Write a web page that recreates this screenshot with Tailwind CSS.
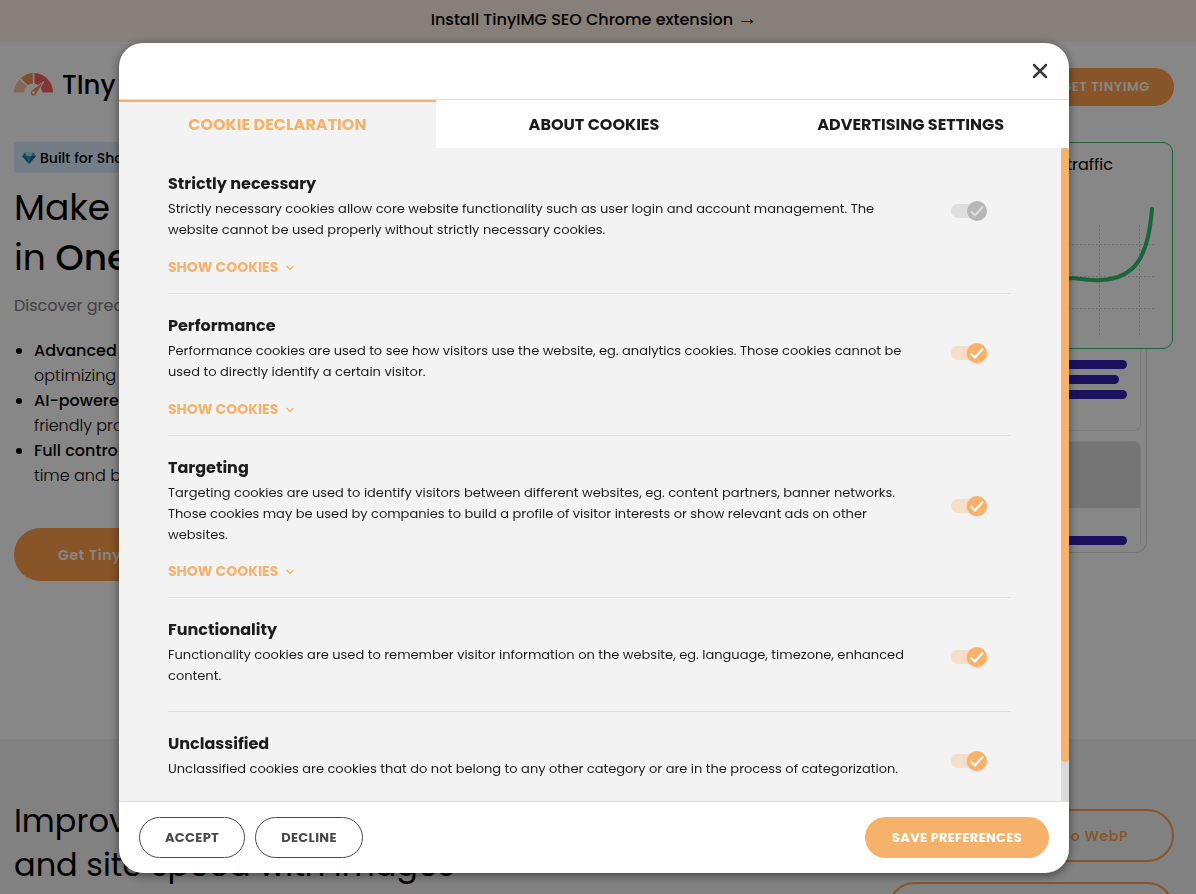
<!DOCTYPE html>
<html lang="en">
<head>
    <meta charset="UTF-8" />
    <meta name="viewport" content="width=device-width, initial-scale=1.0" />
    <title>TinyIMG SEO &amp; Image Optimizer</title>
    <script src="https://cdn.jsdelivr.net/npm/@tailwindcss/browser@4"></script>
    <style>
        body {
            font-family: 'Poppins', 'Inter', sans-serif;
        }
    </style>
</head>
<body class="h-screen overflow-hidden bg-white text-black">
    <!-- Page behind the dialog -->
    <div class="flex h-[42px] items-center justify-center bg-[#fff0e4] pr-2 pb-0.5">
        <a href="#" class="text-base font-medium">Install TinyIMG SEO Chrome extension <span class="font-['Liberation_Sans'] text-xl leading-none font-normal">→</span></a>
    </div>

    <div class="pr-[22px] pl-3.5">
        <header class="flex h-[90px] items-center justify-between">
            <a href="#" class="flex items-center gap-2 pb-1">
                <svg class="h-6 w-10" viewBox="0 0 40 24">
                    <path d="M0 19.500A19.500 19.500 0 0 1 5.500 6.500L13 13A10 10 0 0 0 10 19.500Z" fill="#fdc39a" />
                    <path d="M6.700 5.300A19.500 19.500 0 0 1 18.800 0V10.500A10 10 0 0 0 14 12Z" fill="#f5924c" />
                    <path d="M20.500 0A19.500 19.500 0 0 1 39 19.500H28.500A10 10 0 0 0 20.500 10.500Z" fill="#f9635f" />
                    <path d="M30 8.500L22.800 20.300A3.300 3.300 0 1 1 18 16.800Z" fill="#f5924c" stroke="#fff" stroke-width="1" />
                    <circle cx="19.500" cy="19.500" r="1.400" fill="#fff" />
                </svg>
                <span class="text-[26px] leading-6 font-medium">TIny<span class="ml-1">IMG</span></span>
            </a>
            <a href="#" class="flex h-[38px] items-center rounded-full bg-[#ffa04d] px-6 text-[13px] font-semibold tracking-wider text-white">GET TINYIMG</a>
        </header>

        <section class="grid h-[607px] grid-cols-2 gap-8 pt-[10px]">
            <div>
                <div class="inline-flex h-[31px] items-center gap-1 rounded-sm bg-[#dcebfb] px-2 text-sm font-medium">
                    <svg class="h-3 w-[14px]" viewBox="0 0 14 12">
                        <path d="M3 0H11L14 4L7 12L0 4Z" fill="#2d9cc0" />
                        <path d="M3 0H11L9.500 4H4.500Z" fill="#9fe0f2" />
                        <path d="M0 4H4.500L7 12Z" fill="#1b7ea6" />
                        <path d="M14 4H9.500L7 12Z" fill="#15678c" />
                    </svg>
                    Built for Shopify
                </div>
                <h1 class="mt-[10px] text-[36px] leading-[50px]">Make every image<br />in <span class="font-medium">One click</span></h1>
                <p class="mt-[11px] text-base leading-6 text-[#7b7b7b]">Discover great SEO results</p>
                <ul class="mt-5 list-disc pl-5 text-base leading-[25px] font-light">
                    <li><span class="font-medium">Advanced</span> image<br />optimizing tools</li>
                    <li><span class="font-medium">AI-powered</span> SEO<br />friendly product text</li>
                    <li><span class="font-medium">Full control</span> at any<br />time and budget</li>
                </ul>
                <a href="#" class="mt-10 inline-flex h-[53px] items-center rounded-full bg-[#ffa04d] px-11 text-sm font-semibold tracking-wider text-white">Get TinyIMG now</a>
            </div>
            <div class="flex flex-col pr-px">
                <div class="relative z-10 h-[207px] rounded-[10px] border border-[#30c06e] bg-white px-5 pt-2">
                    <div class="pr-[39px] text-right text-base leading-7">Organic traffic</div>
                    <svg class="absolute right-0 bottom-0 h-[150px] w-[200px]" viewBox="0 0 200 150">
                        <g stroke="#d0d0d0" stroke-dasharray="2 2" fill="none">
                            <path d="M0 46.500H184M0 78.500H184M0 110.500H184M127.500 27V140M167.500 27V140" />
                        </g>
                        <path d="M0 60C60 78 70 79 95 80C110 80 117 83 130 82C162 80 176 61 180 11" fill="none" stroke="#30c06e" stroke-width="4" stroke-linecap="round" />
                    </svg>
                </div>
                <div class="mr-[26px] h-[204px] rounded-b-xl border border-t-0 border-[#dcdcdc] px-[5px]">
                    <div class="flex h-[82px] flex-col items-end gap-[6px] rounded-b-md border border-t-0 border-[#ebebeb] pt-[11px] pr-[13px]">
                        <div class="h-[9px] w-3/5 rounded-full bg-[#3120b4]"></div>
                        <div class="mr-2 h-[9px] w-1/2 rounded-full bg-[#3120b4]"></div>
                        <div class="h-[9px] w-3/5 rounded-full bg-[#3120b4]"></div>
                    </div>
                    <div class="mt-[10px] flex h-[104px] flex-col items-end rounded-t-md border border-b-0 border-[#ebebeb]">
                        <div class="h-[67px] w-full rounded-t-md bg-[#dedede]"></div>
                        <div class="mt-7 mr-[13px] h-[9px] w-3/5 shrink-0 rounded-full bg-[#3120b4]"></div>
                    </div>
                </div>
            </div>
        </section>
    </div>

    <section class="flex h-[155px] justify-between overflow-hidden bg-[#f3f3f3] pt-[60px] pr-[22px] pl-3.5">
        <h2 class="text-[32px] leading-[44px]">Improve loading time<br />and site speed with images</h2>
        <div class="flex w-[286px] flex-col gap-5 pt-[10px]">
            <a href="#" class="flex h-[53px] shrink-0 items-center justify-end rounded-full border-2 border-[#ffa04d] px-11 text-sm font-medium tracking-wider text-[#ffa04d]">Convert to WebP</a>
            <a href="#" aria-label="Resize images" class="h-[53px] shrink-0 rounded-full border-2 border-[#ffa04d]"></a>
        </div>
    </section>

    <!-- Cookie dialog -->
    <div class="fixed inset-0 z-20 flex items-start justify-center bg-black/47 pt-[43px] pr-2">
        <div role="dialog" aria-label="Cookie preferences" class="flex h-[calc(100vh-64px)] w-full max-w-[950px] flex-col overflow-hidden rounded-3xl bg-white text-[#1c1c1c] shadow-[0_2px_10px_rgba(0,0,0,0.5)]">
            <div class="flex h-[57px] shrink-0 items-center justify-end border-b border-[#dfdfdf] pr-5">
                <button type="button" aria-label="Close" class="p-px">
                    <svg class="size-4" viewBox="0 0 16 16" fill="none" stroke="#3a3a3a" stroke-width="2.500" stroke-linecap="round">
                        <path d="M2 2L14 14M14 2L2 14" />
                    </svg>
                </button>
            </div>

            <div role="tablist" class="grid h-12 shrink-0 grid-cols-3 text-base font-bold">
                <button type="button" role="tab" aria-selected="true" class="border-t-2 border-[#f6b26b] bg-[#f3f3f3] text-[#f6b26b]">COOKIE DECLARATION</button>
                <button type="button" role="tab" class="pt-0.5">ABOUT COOKIES</button>
                <button type="button" role="tab" class="pt-0.5">ADVERTISING SETTINGS</button>
            </div>

            <div class="relative min-h-0 flex-1 bg-[#f3f3f3]">
                <div class="h-full overflow-y-auto pt-1 pr-[58px] pl-[49px] [scrollbar-width:none]">
                    <section class="border-b border-[#dfdfdf] pt-5 pb-[15px]">
                        <div class="flex items-center justify-between pr-6">
                            <div>
                                <h3 class="text-base leading-6 font-bold">Strictly necessary</h3>
                                <p class="mt-0.5 text-[13px] leading-[21px]">Strictly necessary cookies allow core website functionality such as user login and account management. The<br />website cannot be used properly without strictly necessary cookies.</p>
                            </div>
                            <label class="relative mt-[10px] flex h-5 w-9 shrink-0 items-center">
                                <input type="checkbox" checked disabled aria-label="Strictly necessary" class="peer sr-only" />
                                <span class="h-[14px] w-[34px] rounded-full bg-[#dedede]"></span>
                                <span class="absolute left-0 flex size-5 items-center justify-center rounded-full bg-[#b7b7b7] peer-checked:left-4">
                                    <svg class="h-3 w-[14px]" viewBox="0 0 14 12" fill="none" stroke="#dedede" stroke-width="2"><path d="M1 6.500L5 10.500L13 1.500" /></svg>
                                </span>
                            </label>
                        </div>
                        <button type="button" class="mt-[17px] flex items-center gap-2 text-sm leading-[21px] font-bold text-[#f6b26b]">SHOW COOKIES
                            <svg class="h-[6px] w-2" viewBox="0 0 8 6" fill="none" stroke="currentColor" stroke-width="1.500"><path d="M0.500 1L4 4.500L7.500 1" /></svg>
                        </button>
                    </section>

                    <section class="border-b border-[#dfdfdf] pt-5 pb-[15px]">
                        <div class="flex items-center justify-between pr-6">
                            <div>
                                <h3 class="text-base leading-6 font-bold">Performance</h3>
                                <p class="mt-0.5 text-[13px] leading-[21px]">Performance cookies are used to see how visitors use the website, eg. analytics cookies. Those cookies cannot be<br />used to directly identify a certain visitor.</p>
                            </div>
                            <label class="relative mt-[10px] flex h-5 w-9 shrink-0 cursor-pointer items-center">
                                <input type="checkbox" checked aria-label="Performance" class="peer sr-only" />
                                <span class="h-[14px] w-[34px] rounded-full bg-[#f5dfc9]"></span>
                                <span class="absolute left-0 flex size-5 items-center justify-center rounded-full bg-[#f6b26b] shadow-sm peer-checked:left-4">
                                    <svg class="h-3 w-[14px]" viewBox="0 0 14 12" fill="none" stroke="#fff" stroke-width="2"><path d="M1 6.500L5 10.500L13 1.500" /></svg>
                                </span>
                            </label>
                        </div>
                        <button type="button" class="mt-[17px] flex items-center gap-2 text-sm leading-[21px] font-bold text-[#f6b26b]">SHOW COOKIES
                            <svg class="h-[6px] w-2" viewBox="0 0 8 6" fill="none" stroke="currentColor" stroke-width="1.500"><path d="M0.500 1L4 4.500L7.500 1" /></svg>
                        </button>
                    </section>

                    <section class="border-b border-[#dfdfdf] pt-5 pb-[15px]">
                        <div class="flex items-center justify-between pr-6">
                            <div>
                                <h3 class="text-base leading-6 font-bold">Targeting</h3>
                                <p class="mt-0.5 text-[13px] leading-[21px]">Targeting cookies are used to identify visitors between different websites, eg. content partners, banner networks.<br />Those cookies may be used by companies to build a profile of visitor interests or show relevant ads on other<br />websites.</p>
                            </div>
                            <label class="relative mt-[10px] flex h-5 w-9 shrink-0 cursor-pointer items-center">
                                <input type="checkbox" checked aria-label="Targeting" class="peer sr-only" />
                                <span class="h-[14px] w-[34px] rounded-full bg-[#f5dfc9]"></span>
                                <span class="absolute left-0 flex size-5 items-center justify-center rounded-full bg-[#f6b26b] shadow-sm peer-checked:left-4">
                                    <svg class="h-3 w-[14px]" viewBox="0 0 14 12" fill="none" stroke="#fff" stroke-width="2"><path d="M1 6.500L5 10.500L13 1.500" /></svg>
                                </span>
                            </label>
                        </div>
                        <button type="button" class="mt-4 flex items-center gap-2 text-sm leading-[21px] font-bold text-[#f6b26b]">SHOW COOKIES
                            <svg class="h-[6px] w-2" viewBox="0 0 8 6" fill="none" stroke="currentColor" stroke-width="1.500"><path d="M0.500 1L4 4.500L7.500 1" /></svg>
                        </button>
                    </section>

                    <section class="border-b border-[#dfdfdf] pt-5 pb-[25px]">
                        <div class="flex items-center justify-between pr-6">
                            <div>
                                <h3 class="text-base leading-6 font-bold">Functionality</h3>
                                <p class="mt-0.5 text-[13px] leading-[21px]">Functionality cookies are used to remember visitor information on the website, eg. language, timezone, enhanced<br />content.</p>
                            </div>
                            <label class="relative mt-[10px] flex h-5 w-9 shrink-0 cursor-pointer items-center">
                                <input type="checkbox" checked aria-label="Functionality" class="peer sr-only" />
                                <span class="h-[14px] w-[34px] rounded-full bg-[#f5dfc9]"></span>
                                <span class="absolute left-0 flex size-5 items-center justify-center rounded-full bg-[#f6b26b] shadow-sm peer-checked:left-4">
                                    <svg class="h-3 w-[14px]" viewBox="0 0 14 12" fill="none" stroke="#fff" stroke-width="2"><path d="M1 6.500L5 10.500L13 1.500" /></svg>
                                </span>
                            </label>
                        </div>
                    </section>

                    <section class="pt-5 pb-[60px]">
                        <div class="flex items-center justify-between pr-6">
                            <div>
                                <h3 class="text-base leading-6 font-bold">Unclassified</h3>
                                <p class="mt-0.5 text-[13px] leading-[21px]">Unclassified cookies are cookies that do not belong to any other category or are in the process of categorization.</p>
                            </div>
                            <label class="relative mt-[10px] flex h-5 w-9 shrink-0 cursor-pointer items-center">
                                <input type="checkbox" checked aria-label="Unclassified" class="peer sr-only" />
                                <span class="h-[14px] w-[34px] rounded-full bg-[#f5dfc9]"></span>
                                <span class="absolute left-0 flex size-5 items-center justify-center rounded-full bg-[#f6b26b] shadow-sm peer-checked:left-4">
                                    <svg class="h-3 w-[14px]" viewBox="0 0 14 12" fill="none" stroke="#fff" stroke-width="2"><path d="M1 6.500L5 10.500L13 1.500" /></svg>
                                </span>
                            </label>
                        </div>
                    </section>
                </div>
                <!-- Scroll bar -->
                <div class="absolute inset-y-0 right-0 w-2 bg-[#dadada]">
                    <div class="h-[94%] rounded bg-[#f6b26b]"></div>
                </div>
            </div>

            <div class="flex h-[72px] shrink-0 items-center gap-[10px] border-t border-[#dfdfdf] px-5">
                <button type="button" class="h-[41px] w-[106px] rounded-full border border-[#4a4a4a] text-[13px] font-bold tracking-wide text-[#4a4a4a]">ACCEPT</button>
                <button type="button" class="h-[41px] w-[108px] rounded-full border border-[#4a4a4a] text-[13px] font-bold tracking-wide text-[#4a4a4a]">DECLINE</button>
                <button type="button" class="ml-auto h-[41px] w-[184px] rounded-full bg-[#f6b26b] text-[13px] font-bold tracking-wide text-white">SAVE PREFERENCES</button>
            </div>
        </div>
    </div>
</body>
</html>
